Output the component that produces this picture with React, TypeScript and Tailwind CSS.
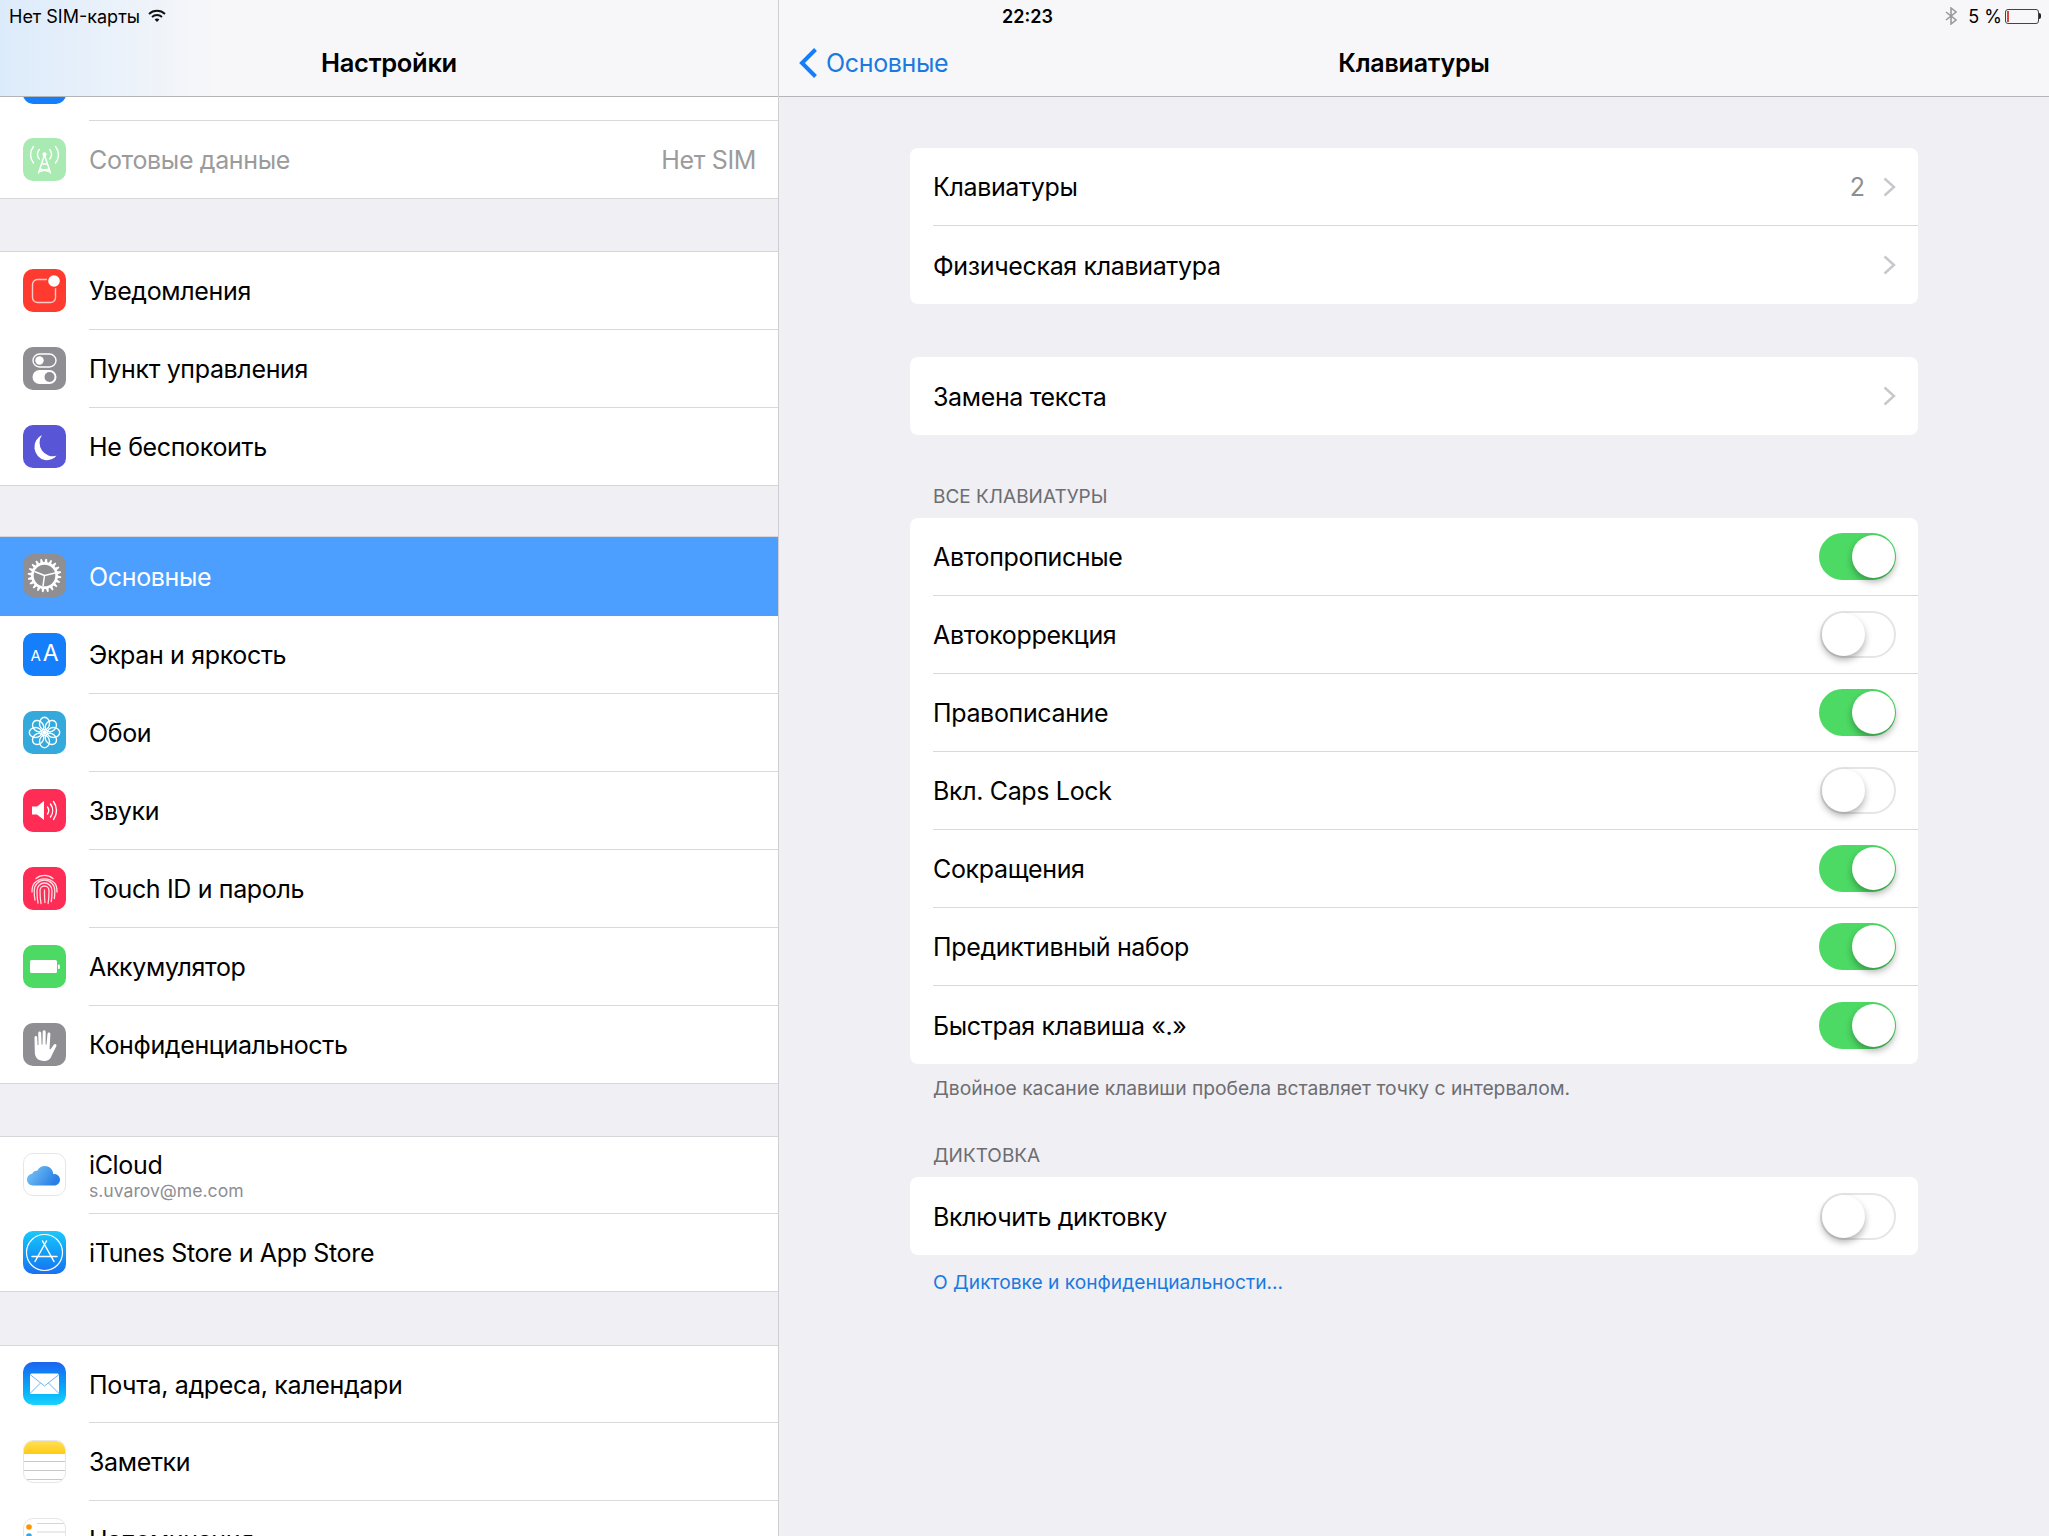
import React from 'react';

const FONT = "font-['Inter','Noto_Sans',sans-serif]";

function Tile({ bg, children }: { bg: string; children?: React.ReactNode }) {
  return (
    <div className={`h-[43px] w-[43px] shrink-0 overflow-hidden rounded-[10px] ${bg}`}>
      <svg viewBox="0 0 43 43" className="h-full w-full" fill="none">
        {children}
      </svg>
    </div>
  );
}

const gearPath = (() => {
  const pts: string[] = [];
  const teeth = 20;
  for (let i = 0; i < teeth; i++) {
    const a = (i / teeth) * Math.PI * 2;
    const step = (Math.PI * 2) / teeth;
    const p = (r: number, t: number) => `${(21.5 + r * Math.cos(t)).toFixed(2)} ${(21.5 + r * Math.sin(t)).toFixed(2)}`;
    pts.push(`${i === 0 ? 'M' : 'L'}${p(13.5, a)}`, `L${p(16.8, a + step * 0.2)}`, `L${p(16.8, a + step * 0.48)}`, `L${p(13.5, a + step * 0.68)}`);
  }
  return pts.join(' ') + ' Z';
})();

const icons: Record<string, React.ReactNode> = {
  cellular: (
    <Tile bg="bg-[#a9e9b2]">
      <g stroke="#fff" strokeWidth="1.5" strokeLinecap="round">
        <path d="M21.5 17 15.5 35M21.5 17 27.5 35M18.6 26h5.8M17 31l9.5 2.5M26 31l-9.5 2.5" />
        <path d="M16.3 11.5a7 7 0 0 0 0 9.5M26.7 11.5a7 7 0 0 1 0 9.5M10.5 8.5a13 13 0 0 0 0 16.500M32.5 8.5a13 13 0 0 1 0 16.500" />
      </g>
      <circle cx="21.5" cy="16.2" r="2" fill="#fff" />
    </Tile>
  ),
  notifications: (
    <Tile bg="bg-[#ff3b30]">
      <rect x="9.5" y="10.5" width="23" height="23" rx="5" stroke="#ffc9c5" strokeWidth="1.4" />
      <circle cx="31" cy="12" r="7.4" fill="#ff3b30" />
      <circle cx="31" cy="12" r="5.8" fill="#fff" />
    </Tile>
  ),
  control: (
    <Tile bg="bg-[#8e8e93]">
      <rect x="10" y="7" width="23" height="13" rx="6.5" stroke="#fff" strokeWidth="1.4" />
      <circle cx="16.5" cy="13.5" r="4.2" fill="#fff" />
      <rect x="9.5" y="23" width="24" height="14" rx="7" fill="#fff" />
      <circle cx="26.5" cy="30" r="5" fill="#8e8e93" />
    </Tile>
  ),
  moon: (
    <Tile bg="bg-[#5856d6]">
      <path d="M19 10a13.500 13.500 0 0 0 14.500 20.800A13.600 13.600 0 0 1 21.800 35 13.300 13.300 0 0 1 19 10Z" fill="#fff" />
    </Tile>
  ),
  general: (
    <Tile bg="bg-[#8e8e93]">
      <path d={gearPath} fill="#fff" />
      <circle cx="21.5" cy="21.5" r="10.800" fill="#8e8e93" />
      <path d="M21.5 21.5 11.500 17.500M21.5 21.5 32 19M21.5 21.5 20 32" stroke="#fff" strokeWidth="1.500" />
    </Tile>
  ),
  display: (
    <div className={`flex h-[43px] w-[43px] shrink-0 items-baseline justify-center rounded-[10px] bg-[#147efb] pt-[8px] text-white ${FONT}`}>
      <span className="text-[15px] leading-[24px]">A</span>
      <span className="ml-[2px] text-[23px] leading-[24px]">A</span>
    </div>
  ),
  wallpaper: (
    <Tile bg="bg-[#34aadc]">
      <g stroke="#fff" strokeWidth="1.4">
        {[0, 45, 90, 135, 180, 225, 270, 315].map((r) => (
          <ellipse key={r} cx="21.5" cy="12.5" rx="5" ry="6.2" transform={`rotate(${r} 21.5 21.5)`} />
        ))}
      </g>
      <circle cx="21.5" cy="21.5" r="2.3" fill="#fff" />
    </Tile>
  ),
  sounds: (
    <Tile bg="bg-[#ff2d55]">
      <path d="M9 17.5h5l7-5.5v19l-7-5.5H9Z" fill="#fff" />
      <g stroke="#fff" strokeWidth="1.4" strokeLinecap="round">
        <path d="M24.5 18a6 6 0 0 1 0 7M27.5 15a11 11 0 0 1 0 13M30.5 12.5a15 15 0 0 1 0 18" />
      </g>
    </Tile>
  ),
  touch: (
    <Tile bg="bg-[#ff2d55]">
      <g stroke="#ffdfe5" strokeWidth="1.300" strokeLinecap="round">
        <path d="M13 11.500a13 13 0 0 1 17 0" />
        <path d="M9 25c0-4 .6-7 2.500-9a14 14 0 0 1 20 0c2 2 2.500 5 2.500 9" />
        <path d="M12 33c-.6-3-.8-6-.8-9.500a10.300 10.300 0 0 1 20.600 0c0 3-.1 5-.4 8" />
        <path d="M15 36c-.8-4-1-8-1-12.500a7.500 7.500 0 0 1 15 0c0 4.500-.2 8-.8 11" />
        <path d="M18 36.500c-.8-4.500-1-9-1-13a4.500 4.500 0 0 1 9 0c0 5-.2 9-.9 13" />
        <path d="M21.500 23c0 5 0 9 .4 12.500" />
      </g>
    </Tile>
  ),
  battery: (
    <Tile bg="bg-[#4cd964]">
      <rect x="7" y="15" width="27" height="13" rx="1.5" fill="#fff" />
      <rect x="35" y="19.500" width="1.800" height="4.500" rx="0.800" fill="#fff" />
    </Tile>
  ),
  privacy: (
    <Tile bg="bg-[#8e8e93]">
      <path
        d="M11.500 14.500c0-2 2.600-2 2.700 0l.4 7.500.9 0-.3-12c0-2.100 2.900-2.100 3 0l.4 11.500h.9l.2-12.700c0-2.100 3-2.100 3 0l-.1 12.800h.9l1-10.800c.2-2 3-1.800 2.900.2l-.8 14.500c0 .8.700 1 1.200.4l2.900-4.200c1.300-1.700 3.600-.3 2.600 1.500l-4.600 9.300C27.400 36.500 24.800 38 21 38c-5.600 0-9-3.300-9.200-8.200Z"
        fill="#fff"
      />
    </Tile>
  ),
  icloud: (
    <div className="h-[43px] w-[43px] shrink-0 rounded-[10px] border border-[#e6e6e8] bg-white">
      <svg viewBox="0 0 43 43" className="-m-px h-[43px] w-[43px]">
        <defs>
          <linearGradient id="cloud" x1="0" y1="0" x2="1" y2="0.4">
            <stop offset="0" stopColor="#7ecbf5" />
            <stop offset="1" stopColor="#2a7fe6" />
          </linearGradient>
        </defs>
        <path d="M10 32.500c-3.500 0-6-2.700-6-5.900 0-3 2.200-5.500 5.200-5.800.8-2.200 2.800-3.400 5-3 1.500-3 4.300-4.800 7.500-4.800 4.600 0 8.300 3.500 8.500 8 .3 0 .6-.1 1-.1 3.300 0 5.800 2.700 5.800 5.800 0 3.200-2.500 5.800-5.800 5.800Z" fill="url(#cloud)" />
      </svg>
    </div>
  ),
  store: (
    <div className="h-[43px] w-[43px] shrink-0 overflow-hidden rounded-[10px] bg-gradient-to-b from-[#1ec8fb] to-[#1b6ff0]">
      <svg viewBox="0 0 43 43" className="h-full w-full" fill="none">
        <circle cx="21.500" cy="21.500" r="18" stroke="#fff" strokeWidth="1.200" />
        <g stroke="#fff" strokeWidth="1.500" strokeLinecap="round">
          <path d="M23.500 10 12 30.500M19.500 10 31 30.500M9 25.500h25" />
        </g>
      </svg>
    </div>
  ),
  mail: (
    <div className="h-[43px] w-[43px] shrink-0 overflow-hidden rounded-[10px] bg-gradient-to-b from-[#1d62f0] to-[#19d3fd]">
      <svg viewBox="0 0 43 43" className="h-full w-full" fill="none">
        <rect x="7" y="11.500" width="29" height="20.500" rx="1.500" fill="#fff" />
        <path d="M7 12.500 21.500 24 36 12.500M7 31.500 17.500 21M36 31.500 25.500 21" stroke="#6db4f7" strokeWidth="1" />
      </svg>
    </div>
  ),
  notes: (
    <div className="h-[43px] w-[43px] shrink-0 overflow-hidden rounded-[10px] border border-[#e6e6e8] bg-white">
      <div className="h-[13px] bg-gradient-to-b from-[#ffdf52] to-[#ffcc00]" />
      <div className="mt-[7px] h-px bg-[#c9c9c9]" />
      <div className="mt-[8px] h-px bg-[#c9c9c9]" />
      <div className="mt-[8px] h-px bg-[#c9c9c9]" />
    </div>
  ),
  reminders: (
    <div className="h-[43px] w-[43px] shrink-0 overflow-hidden rounded-[10px] border border-[#e6e6e8] bg-white">
      <svg viewBox="0 0 43 43" className="-m-px h-[43px] w-[43px]" fill="none">
        <circle cx="6" cy="9" r="2.800" fill="#ff9500" />
        <circle cx="6" cy="18" r="2.800" fill="#34aadc" />
        <path d="M14 5.500h29M14 14h29M14 23h29" stroke="#d6d6d6" />
      </svg>
    </div>
  ),
};

type SideItem = { icon: string; label: string; sub?: string; value?: string; dim?: boolean; active?: boolean; height?: string };

function SideRow({ item, last }: { item: SideItem; last?: boolean }) {
  const h = item.height ?? 'h-[78px]';
  return (
    <div className={`flex ${h} pl-[23px] ${item.active ? 'bg-[#4c9eff]' : last ? 'border-b border-[#d6d6da] bg-white' : 'bg-white'}`}>
      <div className={`flex items-center ${last ? 'pb-px' : 'pb-[2px]'}`}>{icons[item.icon]}</div>
      <div className={`ml-[23px] flex flex-1 items-center justify-between pr-[22px] ${last || item.active ? '' : 'border-b border-[#d9d9dc]'}`}>
        {item.sub ? (
          <div className="flex flex-col">
            <span className="text-[25px] leading-[30px] tracking-[-0.35px] text-black">{item.label}</span>
            <span className="mt-[1px] text-[17.6px] leading-[20px] text-[#8e8e93]">{item.sub}</span>
          </div>
        ) : (
          <span className={`pt-[3px] text-[25px] tracking-[-0.35px] ${item.active ? 'text-white' : item.dim ? 'text-[#9b9b9b]' : 'text-black'}`}>{item.label}</span>
        )}
        {item.value && <span className="pt-[3px] text-[25px] tracking-[-0.35px] text-[#9b9b9b]">{item.value}</span>}
      </div>
    </div>
  );
}

function SideGroup({ items, className }: { items: SideItem[]; className: string }) {
  return (
    <div className={`border-t border-[#d6d6da] ${className}`}>
      {items.map((item, i) => (
        <SideRow key={item.label} item={item} last={i === items.length - 1} />
      ))}
    </div>
  );
}

function Toggle({ on }: { on: boolean }) {
  return (
    <div className={`relative h-[47px] rounded-full ${on ? 'w-[77px] bg-[#4cd964]' : 'w-[76px] border-2 border-[#e5e5e6] bg-white'}`}>
      <div
        className={`absolute h-[43px] w-[43px] rounded-full bg-white shadow-[0_4px_7px_rgba(0,0,0,0.3)] ${on ? 'right-[1px] top-[2px]' : 'left-0 top-0'}`}
      />
    </div>
  );
}

function Chevron() {
  return (
    <svg viewBox="0 0 13 20" className="h-[20px] w-[13px]" fill="none">
      <path d="M1.500 1.500 11 10l-9.500 8.500" stroke="#c7c7cc" strokeWidth="2.400" />
    </svg>
  );
}

function Row({ label, children, last }: { label: string; children?: React.ReactNode; last?: boolean }) {
  return (
    <div className="h-[78px] pl-[23px]">
      <div className={`flex h-full items-center justify-between pr-[22px] ${last ? '' : 'border-b border-[#d9d9dc]'}`}>
        <span className="pt-[3px] text-[25px] tracking-[-0.35px] text-black">{label}</span>
        {children}
      </div>
    </div>
  );
}

const toggles: [string, boolean][] = [
  ['Автопрописные', true],
  ['Автокоррекция', false],
  ['Правописание', true],
  ['Вкл. Caps Lock', false],
  ['Сокращения', true],
  ['Предиктивный набор', true],
  ['Быстрая клавиша «.»', true],
];

export default function App() {
  return (
    <div className={`relative flex h-[1536px] w-[2049px] overflow-hidden bg-[#efeff4] ${FONT}`}>
      {/* status bar */}
      <div className="absolute inset-x-0 top-0 z-20 grid h-[32px] grid-cols-3 items-center pl-[9px] pr-[8px] text-[18px] text-black">
        <div className="flex items-center gap-[8px]">
          <span>Нет SIM-карты</span>
          <svg viewBox="0 0 18 14" className="h-[14px] w-[18px]" fill="none" stroke="#111">
            <path d="M1 5a11.500 11.500 0 0 1 16 0" strokeWidth="1.800" />
            <path d="M4 8a7.200 7.200 0 0 1 10 0" strokeWidth="1.800" />
            <path d="M6.600 10.600 9 13l2.400-2.400a3.400 3.400 0 0 0-4.800 0Z" fill="#111" stroke="none" />
          </svg>
        </div>
        <div className="pl-[5px] text-center font-semibold">22:23</div>
        <div className="flex items-center justify-end">
          <svg viewBox="0 0 12 18" className="mr-[11px] h-[18px] w-[12px]" fill="none" stroke="#9a9a9a" strokeWidth="1.600">
            <path d="M1 5l10 8-5 4V1l5 4L1 13" />
          </svg>
          <span>5 %</span>
          <div className="ml-[3px] flex items-center">
            <div className="h-[15px] w-[34px] rounded-[3px] border border-[#444] pl-[1px] pt-[1px]">
              <div className="h-[11px] w-[2px] bg-[#d9483b]" />
            </div>
            <div className="h-[6px] w-[2px] rounded-r-full bg-[#222]" />
          </div>
        </div>
      </div>

      {/* master */}
      <div className="flex w-[779px] shrink-0 flex-col border-r border-[#cfcfd3]">
        <div className="relative z-10 flex h-[97px] shrink-0 items-center justify-center border-b border-[#b5b5b8] bg-gradient-to-r from-[#dcebfb] to-[#f7f7f9] to-[28%] pt-[30px]">
          <span className="text-[25.5px] font-semibold tracking-[-0.3px] text-black">Настройки</span>
        </div>
        <div className="-mt-[54px] bg-white">
          <div className="flex h-[78px] pl-[23px]">
            <div className="flex items-center">
              <div className="h-[43px] w-[43px] rounded-[10px] bg-[#147efb]" />
            </div>
            <div className="ml-[23px] flex-1 border-b border-[#d9d9dc]" />
          </div>
          <SideRow item={{ icon: 'cellular', label: 'Сотовые данные', value: 'Нет SIM', dim: true }} last />
        </div>
        <SideGroup
          className="mt-[52px]"
          items={[
            { icon: 'notifications', label: 'Уведомления' },
            { icon: 'control', label: 'Пункт управления' },
            { icon: 'moon', label: 'Не беспокоить' },
          ]}
        />
        <SideGroup
          className="mt-[50px]"
          items={[
            { icon: 'general', label: 'Основные', active: true, height: 'h-[79px]' },
            { icon: 'display', label: 'Экран и яркость' },
            { icon: 'wallpaper', label: 'Обои' },
            { icon: 'sounds', label: 'Звуки' },
            { icon: 'touch', label: 'Touch ID и пароль' },
            { icon: 'battery', label: 'Аккумулятор' },
            { icon: 'privacy', label: 'Конфиденциальность' },
          ]}
        />
        <SideGroup
          className="mt-[52px]"
          items={[
            { icon: 'icloud', label: 'iCloud', sub: 's.uvarov@me.com', height: 'h-[77px]' },
            { icon: 'store', label: 'iTunes Store и App Store' },
          ]}
        />
        <SideGroup
          className="mt-[53px]"
          items={[
            { icon: 'mail', label: 'Почта, адреса, календари', height: 'h-[77px]' },
            { icon: 'notes', label: 'Заметки' },
            { icon: 'reminders', label: 'Напоминания' },
          ]}
        />
      </div>

      {/* detail */}
      <div className="flex flex-1 flex-col">
        <div className="relative flex h-[97px] shrink-0 items-center justify-center border-b border-[#b5b5b8] bg-[#f7f7f9] pt-[32px]">
          <div className="absolute left-[19px] top-[44px] flex items-center gap-[8px]">
            <svg viewBox="0 0 20 32" className="h-[32px] w-[20px]" fill="none">
              <path d="M17.500 2.500 4 16l13.500 13.500" stroke="#147efb" strokeWidth="4" />
            </svg>
            <span className="pt-[1px] text-[25px] tracking-[-0.35px] text-[#1a7ae0]">Основные</span>
          </div>
          <span className="text-[25px] font-semibold tracking-[-0.2px] text-black">Клавиатуры</span>
        </div>

        <div className="px-[131px] pt-[51px]">
          <div className="rounded-[8px] bg-white">
            <Row label="Клавиатуры">
              <div className="flex items-center gap-[18px]">
                <span className="pt-[3px] text-[25px] text-[#8e8e93]">2</span>
                <Chevron />
              </div>
            </Row>
            <Row label="Физическая клавиатура" last>
              <Chevron />
            </Row>
          </div>

          <div className="mt-[53px] rounded-[8px] bg-white">
            <Row label="Замена текста" last>
              <Chevron />
            </Row>
          </div>

          <div className="mt-[47px] h-[36px] pl-[23px] text-[19px] leading-[30px] text-[#6d6d72]">ВСЕ КЛАВИАТУРЫ</div>

          <div className="rounded-[8px] bg-white">
            {toggles.map(([label, on], i) => (
              <Row key={label} label={label} last={i === toggles.length - 1}>
                <Toggle on={on} />
              </Row>
            ))}
          </div>

          <div className="mt-[10px] pl-[23px] text-[19.25px] leading-[28px] text-[#6d6d72]">Двойное касание клавиши пробела вставляет точку с интервалом.</div>

          <div className="mt-[39px] h-[36px] pl-[23px] text-[19px] leading-[30px] text-[#6d6d72]">ДИКТОВКА</div>

          <div className="rounded-[8px] bg-white">
            <Row label="Включить диктовку" last>
              <Toggle on={false} />
            </Row>
          </div>

          <div className="mt-[13px] pl-[23px] text-[19.2px] leading-[28px] text-[#1a7ae0]">О Диктовке и конфиденциальности...</div>
        </div>
      </div>
    </div>
  );
}
